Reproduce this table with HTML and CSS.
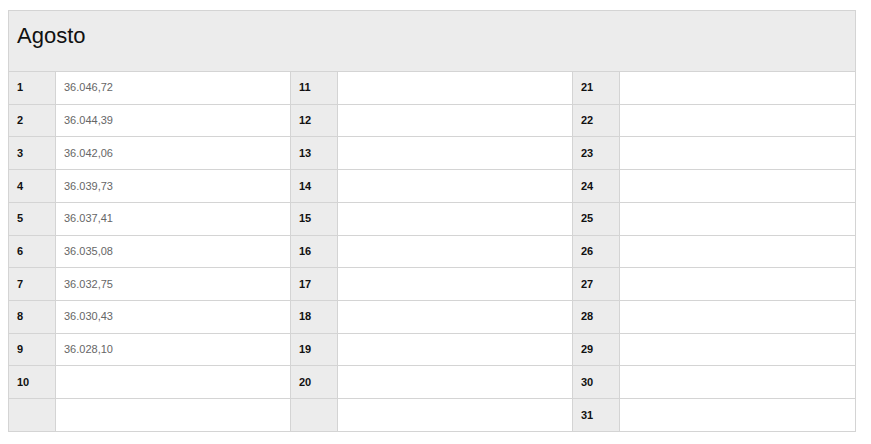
FILE: index.html
```html
<!DOCTYPE html>
<html lang="pt">
<head>
<meta charset="utf-8">
<title>Agosto</title>
<link rel="stylesheet" href="styles.css">
</head>
<body>
<div class="month">
  <div class="month-head">Agosto</div>
  <div class="days">
    <div class="d">1</div><div class="v">36.046,72</div>
    <div class="d">11</div><div class="v"></div>
    <div class="d">21</div><div class="v"></div>

    <div class="d">2</div><div class="v">36.044,39</div>
    <div class="d">12</div><div class="v"></div>
    <div class="d">22</div><div class="v"></div>

    <div class="d">3</div><div class="v">36.042,06</div>
    <div class="d">13</div><div class="v"></div>
    <div class="d">23</div><div class="v"></div>

    <div class="d">4</div><div class="v">36.039,73</div>
    <div class="d">14</div><div class="v"></div>
    <div class="d">24</div><div class="v"></div>

    <div class="d">5</div><div class="v">36.037,41</div>
    <div class="d">15</div><div class="v"></div>
    <div class="d">25</div><div class="v"></div>

    <div class="d">6</div><div class="v">36.035,08</div>
    <div class="d">16</div><div class="v"></div>
    <div class="d">26</div><div class="v"></div>

    <div class="d">7</div><div class="v">36.032,75</div>
    <div class="d">17</div><div class="v"></div>
    <div class="d">27</div><div class="v"></div>

    <div class="d">8</div><div class="v">36.030,43</div>
    <div class="d">18</div><div class="v"></div>
    <div class="d">28</div><div class="v"></div>

    <div class="d">9</div><div class="v">36.028,10</div>
    <div class="d">19</div><div class="v"></div>
    <div class="d">29</div><div class="v"></div>

    <div class="d">10</div><div class="v"></div>
    <div class="d">20</div><div class="v"></div>
    <div class="d">30</div><div class="v"></div>

    <div class="d"></div><div class="v"></div>
    <div class="d"></div><div class="v"></div>
    <div class="d">31</div><div class="v"></div>
  </div>
</div>
</body>
</html>
```

FILE: styles.css
```css
html, body {
  background: #ffffff;
}
body {
  margin: 10px 8px 8px 8px;
  font-family: "Liberation Sans", Arial, sans-serif;
  color: #000;
}
.month {
  width: 848px;
}
.month-head {
  box-sizing: border-box;
  height: 61px;
  background: #ececec;
  border: 1px solid #d4d4d4;
  border-bottom: none;
  padding: 12px 0 0 8px;
  font-size: 22px;
  line-height: 25px;
  color: #111;
}
.days {
  display: grid;
  grid-template-columns: 47px 235px 47px 235px 47px 236px;
  grid-template-rows: repeat(11, 32.73px);
  border-top: 1px solid #d4d4d4;
  border-left: 1px solid #d4d4d4;
}
.d, .v {
  box-sizing: border-box;
  border-right: 1px solid #d4d4d4;
  border-bottom: 1px solid #d4d4d4;
  display: flex;
  align-items: center;
  padding-left: 8px;
  padding-bottom: 1px;
  font-size: 11px;
}
.d {
  background: #ececec;
  font-weight: bold;
  color: #111;
}
.v {
  background: #fff;
  color: #666;
}
```
